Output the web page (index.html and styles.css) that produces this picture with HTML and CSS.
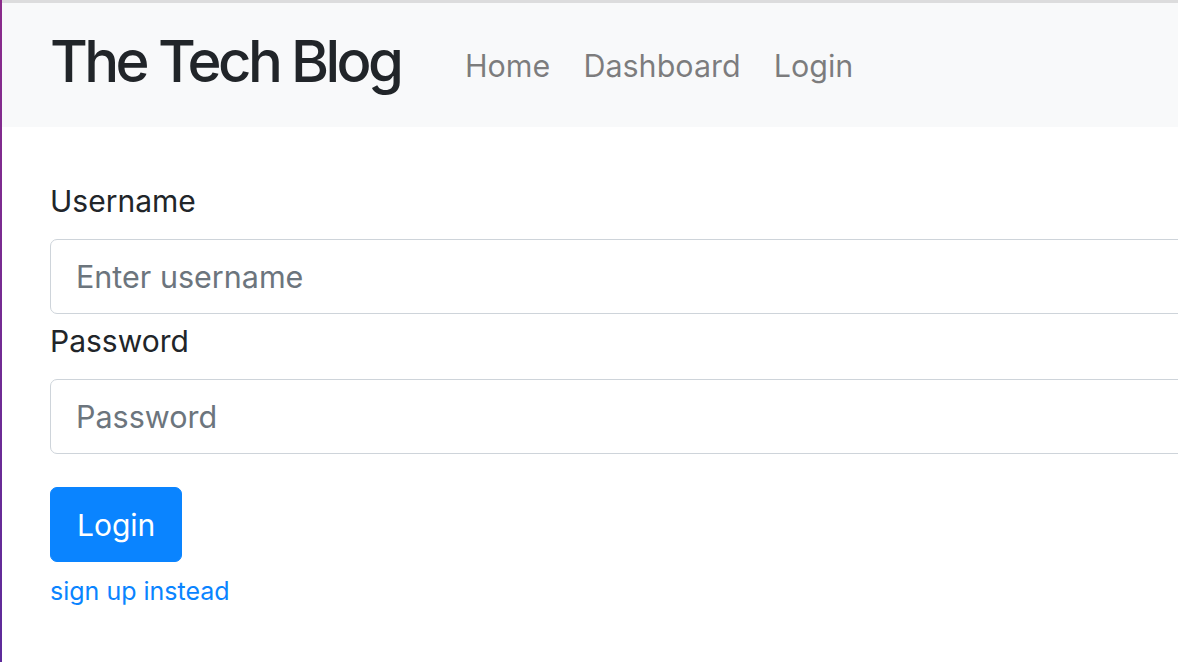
FILE: index.html
```html
<!DOCTYPE html>
<html lang="en">
<head>
<meta charset="utf-8">
<title>The Tech Blog</title>
<link rel="stylesheet" href="styles.css">
</head>
<body>
<nav class="navbar">
  <a class="brand" href="#">The Tech Blog</a>
  <ul class="nav">
    <li><a class="nav-link" href="#">Home</a></li>
    <li><a class="nav-link" href="#">Dashboard</a></li>
    <li><a class="nav-link" href="#">Login</a></li>
  </ul>
</nav>
<main class="main">
  <form class="login-form">
    <div class="form-group">
      <label class="label" for="username">Username</label>
      <input class="input" id="username" type="text" placeholder="Enter username">
    </div>
    <div class="form-group">
      <label class="label" for="password">Password</label>
      <input class="input" id="password" type="password" placeholder="Password">
    </div>
    <button class="btn" type="submit">Login</button>
    <a class="signup" href="#">sign up instead</a>
  </form>
</main>
</body>
</html>
```

FILE: styles.css
```css
* { box-sizing: border-box; }
html, body { height: 100%; }
body {
  margin: 0;
  overflow: hidden;
  font-family: Inter, "Noto Sans", "Liberation Sans", sans-serif;
  color: #212529;
  background: #fff;
  border-left: 2px solid #7a2a8f;
  border-image: linear-gradient(#8b2b8b, #5d2b9b) 1;
}
.navbar {
  display: flex;
  align-items: center;
  height: 127px;
  border-top: 3px solid #dcdcdd;
  background: #f8f9fa;
  padding-left: 48px;
}
.brand {
  font-size: 58px;
  font-weight: 500;
  letter-spacing: -3.6px;
  line-height: 1;
  color: #212529;
  text-decoration: none;
  margin-right: 48px;
  padding-bottom: 8px;
}
.nav {
  display: flex;
  list-style: none;
  margin: 0;
  padding: 0;
}
.nav-link {
  display: block;
  font-size: 30.5px;
  line-height: 45px;
  padding: 0 16.5px;
  color: rgba(0, 0, 0, 0.5);
  text-decoration: none;
}
.main {
  padding: 52px 0 0 48px;
}
.login-form {
  width: 1300px;
  display: flex;
  flex-direction: column;
  align-items: flex-start;
}
.form-group {
  width: 100%;
  margin-bottom: 5px;
}
.label {
  display: block;
  font-size: 30px;
  line-height: 45px;
  margin-bottom: 15px;
}
.input {
  display: block;
  width: 100%;
  height: 75px;
  padding: 0 25px;
  font-family: inherit;
  font-size: 30.5px;
  color: #495057;
  border: 1px solid #ced4da;
  border-radius: 7px;
  background: #fff;
}
.input::placeholder { color: #6c757d; }
.btn {
  margin-top: 28px;
  height: 75px;
  padding: 0 26px;
  font-family: inherit;
  font-size: 30px;
  color: #fff;
  background: #0a84ff;
  border: 1px solid #0a84ff;
  border-radius: 7px;
}
.signup {
  margin-top: 10px;
  font-size: 25px;
  line-height: 39px;
  color: #0a84ff;
  text-decoration: none;
}
```
